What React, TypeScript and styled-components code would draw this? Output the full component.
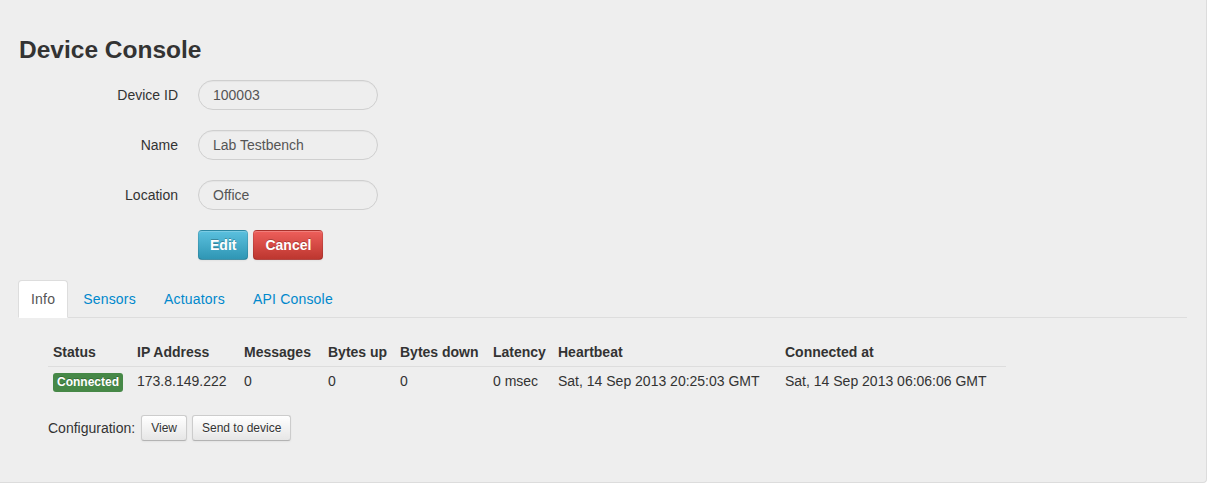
import React from "react";
import styled, { createGlobalStyle } from "styled-components";

const GlobalStyle = createGlobalStyle`
  html, body {
    margin: 0;
    padding: 0;
    background: #ffffff;
  }
  body {
    font-family: "Liberation Sans", Arial, Helvetica, sans-serif;
    font-size: 14px;
    line-height: 20px;
    color: #333333;
  }
  * { box-sizing: border-box; }
`;

const Panel = styled.div`
  width: 1207px;
  height: 483px;
  background: #eeeeee;
  border-right: 1px solid #dcdcdc;
  border-bottom: 1px solid #dcdcdc;
  border-bottom-right-radius: 4px;
  padding: 30px 19px 0 18px;
`;

const Title = styled.h3`
  margin: 0 0 10px 1px;
  font-size: 24.5px;
  line-height: 40px;
  font-weight: bold;
  color: #333333;
`;

const FormRow = styled.div`
  display: flex;
  align-items: flex-start;
  margin-bottom: 20px;
`;

const Label = styled.label`
  width: 160px;
  margin-right: 20px;
  padding-top: 5px;
  text-align: right;
  line-height: 20px;
  color: #333333;
`;

const Input = styled.input`
  width: 180px;
  height: 30px;
  padding: 0 14px;
  border: 1px solid #cfcfcf;
  border-radius: 15px;
  background: #eeeeee;
  box-shadow: inset 0 1px 1px rgba(0, 0, 0, 0.04);
  font-family: inherit;
  font-size: 14px;
  color: #555555;
  outline: none;
`;

const Actions = styled.div`
  display: flex;
  gap: 5px;
  margin-left: 180px;
  margin-bottom: 20px;
`;

const ColorButton = styled.button<{ $variant: "info" | "danger" }>`
  height: 30px;
  padding: 0 11px;
  font-family: inherit;
  font-size: 14px;
  font-weight: bold;
  line-height: 20px;
  color: #ffffff;
  text-shadow: 0 -1px 0 rgba(0, 0, 0, 0.25);
  border: 1px solid;
  border-color: rgba(0, 0, 0, 0.1) rgba(0, 0, 0, 0.1) rgba(0, 0, 0, 0.25);
  border-radius: 4px;
  box-shadow: inset 0 1px 0 rgba(255, 255, 255, 0.2), 0 1px 2px rgba(0, 0, 0, 0.05);
  background-image: ${(p) =>
    p.$variant === "info"
      ? "linear-gradient(to bottom, #5bc0de, #2f96b4)"
      : "linear-gradient(to bottom, #ee5f5b, #bd362f)"};
  cursor: pointer;
`;

const Tabs = styled.ul`
  display: flex;
  list-style: none;
  margin: 0;
  padding: 0;
  border-bottom: 1px solid #dddddd;
`;

const Tab = styled.li<{ $active?: boolean }>`
  margin-right: 2px;
  margin-bottom: -1px;
  padding: 8px 12px;
  line-height: 20px;
  letter-spacing: 0.2px;
  border: 1px solid ${(p) => (p.$active ? "#dddddd" : "transparent")};
  border-bottom-color: transparent;
  border-radius: 4px 4px 0 0;
  background: ${(p) => (p.$active ? "#ffffff" : "transparent")};
  color: ${(p) => (p.$active ? "#555555" : "#0088cc")};
`;

const TabContent = styled.div`
  padding: 20px 30px 0 30px;
`;

const Table = styled.table`
  width: 958px;
  table-layout: fixed;
  border-collapse: collapse;
  border-spacing: 0;
`;

const Th = styled.th`
  padding: 4px 5px;
  text-align: left;
  font-weight: bold;
  line-height: 20px;
  white-space: nowrap;
`;

const Td = styled.td`
  padding: 4px 5px;
  line-height: 20px;
  border-top: 1px solid #dddddd;
  white-space: nowrap;
`;

const Badge = styled.span`
  display: inline-block;
  padding: 2px 4px 3px;
  font-size: 12px;
  font-weight: bold;
  line-height: 14px;
  color: #ffffff;
  background: #468847;
  border-radius: 3px;
  text-shadow: 0 -1px 0 rgba(0, 0, 0, 0.25);
  vertical-align: middle;
`;

const ConfigRow = styled.div`
  display: flex;
  align-items: center;
  margin-top: 19px;
  font-size: 14px;
  color: #333333;
`;

const ConfigLabel = styled.span`
  margin-right: 6px;
`;

const SmallButton = styled.button`
  height: 26px;
  margin-right: 5px;
  padding: 0 9px;
  font-family: inherit;
  font-size: 12px;
  line-height: 20px;
  color: #333333;
  text-shadow: 0 1px 1px rgba(255, 255, 255, 0.75);
  background-image: linear-gradient(to bottom, #ffffff, #e6e6e6);
  border: 1px solid #cccccc;
  border-bottom-color: #b3b3b3;
  border-radius: 3px;
  box-shadow: inset 0 1px 0 rgba(255, 255, 255, 0.2), 0 1px 2px rgba(0, 0, 0, 0.05);
  cursor: pointer;
`;

const columns: { name: string; width: number }[] = [
  { name: "Status", width: 84 },
  { name: "IP Address", width: 107 },
  { name: "Messages", width: 84 },
  { name: "Bytes up", width: 72 },
  { name: "Bytes down", width: 93 },
  { name: "Latency", width: 65 },
  { name: "Heartbeat", width: 227 },
  { name: "Connected at", width: 226 },
];

const fields = [
  { label: "Device ID", value: "100003" },
  { label: "Name", value: "Lab Testbench" },
  { label: "Location", value: "Office" },
];

export default function App() {
  return (
    <>
      <GlobalStyle />
      <Panel>
        <Title>Device Console</Title>
        {fields.map((f) => (
          <FormRow key={f.label}>
            <Label>{f.label}</Label>
            <Input defaultValue={f.value} />
          </FormRow>
        ))}
        <Actions>
          <ColorButton $variant="info">Edit</ColorButton>
          <ColorButton $variant="danger">Cancel</ColorButton>
        </Actions>
        <Tabs>
          <Tab $active>Info</Tab>
          <Tab>Sensors</Tab>
          <Tab>Actuators</Tab>
          <Tab>API Console</Tab>
        </Tabs>
        <TabContent>
          <Table>
            <colgroup>
              {columns.map((c) => (
                <col key={c.name} style={{ width: c.width }} />
              ))}
            </colgroup>
            <thead>
              <tr>
                {columns.map((c) => (
                  <Th key={c.name}>{c.name}</Th>
                ))}
              </tr>
            </thead>
            <tbody>
              <tr>
                <Td>
                  <Badge>Connected</Badge>
                </Td>
                <Td>173.8.149.222</Td>
                <Td>0</Td>
                <Td>0</Td>
                <Td>0</Td>
                <Td>0 msec</Td>
                <Td>Sat, 14 Sep 2013 20:25:03 GMT</Td>
                <Td>Sat, 14 Sep 2013 06:06:06 GMT</Td>
              </tr>
            </tbody>
          </Table>
          <ConfigRow>
            <ConfigLabel>Configuration:</ConfigLabel>
            <SmallButton>View</SmallButton>
            <SmallButton>Send to device</SmallButton>
          </ConfigRow>
        </TabContent>
      </Panel>
    </>
  );
}
